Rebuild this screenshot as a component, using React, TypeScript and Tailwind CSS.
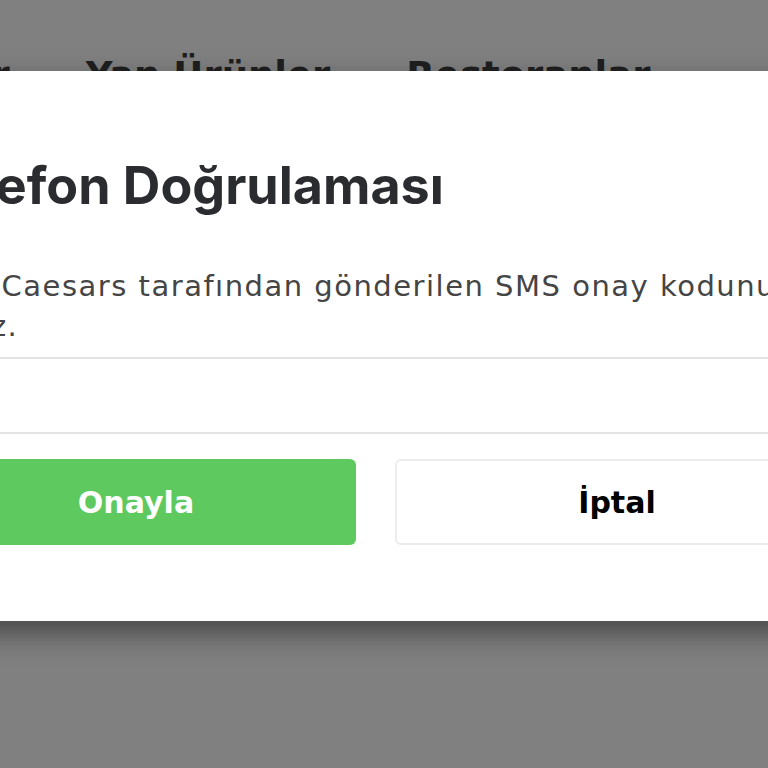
export default function App() {
  return (
    <div className="relative h-[768px] w-[768px] overflow-hidden bg-[#808080] font-['DejaVu_Sans',sans-serif]">
      <div className="h-[71px] overflow-hidden">
        <div className="-ml-[154px] flex gap-[76px] whitespace-nowrap pt-[57px] text-[37px] font-bold leading-none text-[#1d1d1d]">
          <span>Pizzalar</span>
          <span>Yan Ürünler</span>
          <span>Restoranlar</span>
        </div>
      </div>

      <div className="-ml-[114px] flex h-[550px] w-[983px] flex-col bg-white px-[30px] shadow-[0_12px_28px_rgba(0,0,0,0.45)]">
        <h2 className="mt-[83px] whitespace-nowrap pl-[4px] font-['Inter',sans-serif] text-[52px] font-bold leading-[64px] text-[#2a2c30]">
          Telefon Doğrulaması
        </h2>
        <p className="-ml-[7px] mt-[48px] text-[29px] leading-[40px] tracking-[1.5px] text-[#454545]">
          Little Caesars tarafından gönderilen SMS onay kodunu giriniz.
        </p>
        <div className="mt-[11px] h-[77px] border-y-2 border-[#e4e4e4]" />
        <div className="mt-[25px] flex gap-[39px]">
          <button className="flex h-[86px] flex-1 items-center justify-center rounded-[6px] bg-[#5dc95f] text-[30px] font-bold text-white">
            Onayla
          </button>
          <button className="flex h-[86px] flex-1 items-center justify-center rounded-[6px] border-2 border-[#ececec] bg-white text-[30px] font-bold text-black">
            İptal
          </button>
        </div>
      </div>
    </div>
  );
}
